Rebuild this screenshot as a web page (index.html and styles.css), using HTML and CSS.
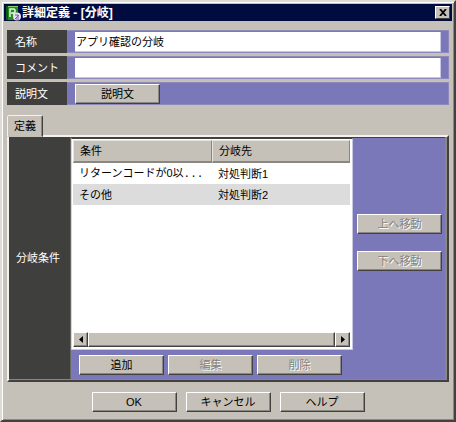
FILE: index.html
```html
<!DOCTYPE html>
<html lang="ja">
<head>
<meta charset="utf-8">
<title>詳細定義 - [分岐]</title>
<link rel="stylesheet" href="styles.css">
</head>
<body>
<main class="window">
  <header class="titlebar">
    <svg class="app-icon" viewBox="0 0 16 16" aria-hidden="true">
      <path d="M0 1h12v14H0z" fill="#238b22"/>
      <path d="M0 1h2v14H0z" fill="#0b5a12"/>
      <path d="M2 1h10v1H2z" fill="#7ed36b"/>
      <path d="M4 12V4h4l1 1v2L8 8H5M7 8l2 3" fill="none" stroke="#e4f8dc" stroke-width="1.5"/>
      <circle cx="11" cy="11.500" r="4" fill="#e9ddf5"/>
      <path d="M9 10h3v3M13 10l-4 4M10 14h3" fill="none" stroke="#8854a8"/>
    </svg>
    <h1 class="title">詳細定義 - [分岐]</h1>
    <button class="close" type="button" aria-label="閉じる">
      <svg class="close-mark" viewBox="0 0 8 7" aria-hidden="true"><path d="M1 0l6 7M7 0L1 7" stroke="#000" stroke-width="1.800"/></svg>
    </button>
  </header>

  <form class="content">
    <div class="fields">
      <div class="row">
        <label class="label" for="name">名称</label>
        <div class="field"><input class="text" id="name" type="text" value="アプリ確認の分岐"></div>
      </div>
      <div class="row">
        <label class="label" for="comment">コメント</label>
        <div class="field"><input class="text" id="comment" type="text"></div>
      </div>
      <div class="row">
        <label class="label" for="description">説明文</label>
        <div class="field"><button class="button" id="description" type="button">説明文</button></div>
      </div>
    </div>

    <div class="tabs" role="tablist">
      <button class="tab" type="button" role="tab" aria-selected="true">定義</button>
    </div>
    <section class="panel">
      <div class="side-label">分岐条件</div>
      <div class="conditions">
        <div class="list">
          <table class="table">
            <colgroup><col class="col-condition"><col></colgroup>
            <thead><tr><th>条件</th><th>分岐先</th></tr></thead>
            <tbody>
              <tr><td>リターンコードが0以<span class="dots">...</span></td><td>対処判断1</td></tr>
              <tr class="selected"><td>その他</td><td>対処判断2</td></tr>
            </tbody>
          </table>
          <div class="scrollbar">
            <button class="arrow" type="button" aria-label="左へ"><svg class="arrow-mark" viewBox="0 0 4 7" aria-hidden="true"><path d="M4 0v7L0 3.500z"/></svg></button>
            <div class="thumb"></div>
            <button class="arrow" type="button" aria-label="右へ"><svg class="arrow-mark" viewBox="0 0 4 7" aria-hidden="true"><path d="M0 0v7l4-3.500z"/></svg></button>
          </div>
        </div>
        <div class="edit-actions">
          <button class="button" type="button">追加</button>
          <button class="button" type="button" disabled>編集</button>
          <button class="button" type="button" disabled>削除</button>
        </div>
      </div>
      <div class="move-actions">
        <button class="button" type="button" disabled>上へ移動</button>
        <button class="button" type="button" disabled>下へ移動</button>
      </div>
    </section>

    <footer class="footer">
      <button class="button" type="submit">OK</button>
      <button class="button" type="button">キャンセル</button>
      <button class="button" type="button">ヘルプ</button>
    </footer>
  </form>
</main>
</body>
</html>
```
FILE: styles.css
```css
:root {
  --face: #c5c0b8;
  --light: #f4f2ee;
  --shade: #8a8782;
  --dark: #42413f;
  --purple: #7b78b9;
  --charcoal: #3f403d;
}

* {
  box-sizing: border-box;
}

body {
  margin: 0;
  background: var(--face);
  color: #000;
  font: 11px/16px "Liberation Sans Narrow", "Liberation Sans", "Noto Sans CJK JP", sans-serif;
}

button,
input {
  margin: 0;
  padding: 0;
  font: inherit;
  color: inherit;
}

.window {
  display: flex;
  flex-direction: column;
  min-height: 100vh;
  padding: 2px;
  border: 2px solid;
  border-color: #dedbd5 var(--dark) var(--dark) #dedbd5;
  box-shadow: inset 1px 1px 0 #fff, inset -1px -1px 0 var(--shade);
}

.titlebar {
  display: flex;
  align-items: center;
  height: 17px;
  padding: 0 2px;
  background: #000c40;
}

.app-icon {
  width: 16px;
  height: 16px;
}

.title {
  flex: 1;
  margin: 0;
  color: #fff;
  font: bold 12px/16px "Liberation Sans", "Noto Sans CJK JP", sans-serif;
}

.close {
  display: flex;
  align-items: center;
  justify-content: center;
  width: 15px;
  height: 13px;
  background: var(--face);
  border: 1px solid;
  border-color: #fff var(--dark) var(--dark) #fff;
}

.close-mark {
  width: 8px;
  height: 7px;
}

.content {
  display: flex;
  flex: 1;
  flex-direction: column;
  padding: 9px 3px 6px;
}

.fields {
  display: grid;
  gap: 3px;
}

.row {
  display: flex;
  height: 23px;
}

.label {
  display: flex;
  align-items: center;
  width: 60px;
  padding-left: 8px;
  background: var(--charcoal);
  color: #fff;
}

.field {
  display: flex;
  flex: 1;
  align-items: center;
  padding: 0 7px 0 8px;
  background: var(--purple);
  border: 1px solid #8d8abb;
  border-left: 0;
}

.text {
  width: 100%;
  height: 20px;
  padding: 0 1px;
  background: #fff;
  border: 0;
  border-right: 1px solid #c9c7e2;
  border-bottom: 1px solid #c9c7e2;
}

.button {
  width: 85px;
  height: 20px;
  background: var(--face);
  border: 1px solid;
  border-color: #fff var(--dark) var(--dark) #fff;
  box-shadow: inset -1px -1px 0 var(--shade);
  line-height: 16px;
}

.button:disabled {
  color: #85827d;
  text-shadow: 1px 1px 0 #fff;
}

.tabs {
  display: flex;
  margin-top: 10px;
}

.tab {
  z-index: 1;
  width: 36px;
  height: 22px;
  margin-bottom: -2px;
  background: var(--face);
  border: 1px solid;
  border-color: var(--light) var(--dark) transparent var(--light);
  border-radius: 2px 2px 0 0;
  box-shadow: inset -1px 0 0 var(--shade);
}

.panel {
  display: flex;
  flex: 1;
  background: var(--purple);
  border: 2px solid;
  border-color: var(--light) var(--dark) var(--dark) var(--light);
  box-shadow: inset -2px -1px 0 var(--shade), inset 0 1px 0 var(--dark);
}

.side-label {
  display: flex;
  align-items: center;
  width: 62px;
  margin-bottom: 1px;
  padding-left: 7px;
  background: var(--charcoal);
  border-right: 1px solid #666762;
  color: #fff;
}

.conditions {
  display: flex;
  flex: 1;
  flex-direction: column;
}

.list {
  display: flex;
  flex: 1;
  flex-direction: column;
  margin-top: 1px;
  padding: 1px 2px 2px 1px;
  background: #fff;
  border: 1px solid;
  border-color: var(--dark) #c9c7e2 #c9c7e2 #d8d5cf;
}

.table {
  width: 100%;
  border-collapse: separate;
  border-spacing: 0;
  table-layout: fixed;
}

.col-condition {
  width: 139px;
}

th,
td {
  height: 21px;
  padding: 0 6px;
  font-weight: normal;
  text-align: left;
  white-space: nowrap;
}

th {
  height: 23px;
  background: var(--face);
  border: 1px solid;
  border-color: #e6e3dd var(--shade) var(--shade) #e6e3dd;
  border-bottom-width: 2px;
}

.selected {
  background: #dcdcdc;
}

.dots {
  font-family: "Liberation Mono", monospace;
}

.scrollbar {
  display: flex;
  height: 15px;
  margin-top: auto;
}

.arrow,
.thumb {
  background: var(--face);
  border: 1px solid;
  border-color: #fff var(--dark) var(--dark) #fff;
  box-shadow: inset -1px -1px 0 var(--shade);
}

.arrow {
  display: flex;
  align-items: center;
  justify-content: center;
  width: 15px;
}

.arrow-mark {
  width: 4px;
  height: 7px;
}

.thumb {
  flex: 1;
}

.edit-actions {
  display: flex;
  gap: 4px;
  padding: 5px 8px;
}

.move-actions {
  display: flex;
  flex-direction: column;
  gap: 17px;
  padding: 77px 5px 0 4px;
}

.footer {
  display: flex;
  justify-content: center;
  gap: 9px;
  padding-top: 10px;
}
```
